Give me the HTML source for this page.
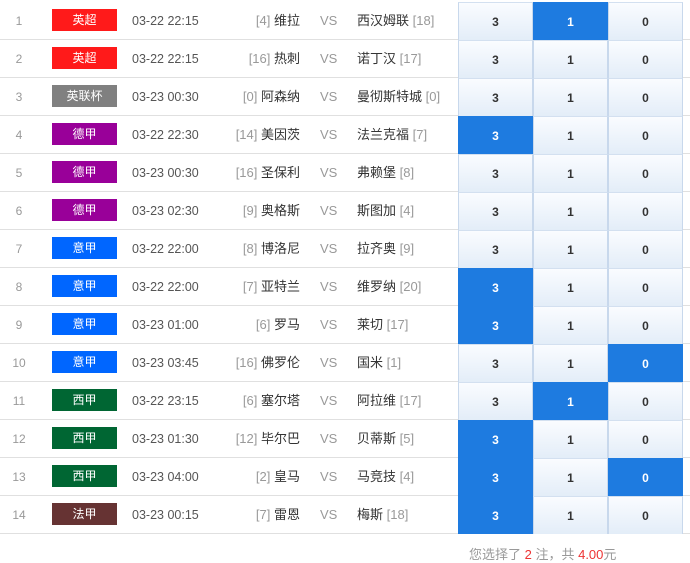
<!DOCTYPE html>
<html><head><meta charset="utf-8"><style>
body{margin:0;width:690px;height:562px;background:#fff;font-family:"Liberation Sans","Noto Sans CJK SC",sans-serif;position:relative;overflow:hidden}
.r{position:absolute;left:0;width:690px;height:38px;border-bottom:1px solid #e0e0e0;box-sizing:border-box;font-size:13px;color:#333}
.r>span{position:absolute;top:0;line-height:38px}
.n{left:0;width:38px;text-align:center;color:#999;font-size:12px}
.b{left:52px;width:65px;height:22px;top:7px!important;line-height:22px!important;color:#fff;text-align:center;font-size:12px}
.t{left:132px;color:#555;font-size:12.5px}
.h{right:390px;text-align:right;white-space:nowrap}
.v{left:320px;color:#999}
.a{left:357px;white-space:nowrap}
.g{color:#999}
.o{width:75px;height:38px;box-sizing:border-box;border-left:1px solid #c8d8ec;border-right:1px solid #c8d8ec;border-top:1px solid #d3e0f0;text-align:center;font-weight:bold;font-size:12px;background:linear-gradient(#fafcff,#e3edf8)}
.o.s{background:#1e7be0;color:#fff;border-color:#1e7be0}
.c1{left:458px}.c2{left:533px}.c3{left:608px}
.ft{position:absolute;top:544px;left:469px;font-size:13px;color:#999}
.red{color:#e33}
</style></head><body>
<div class="r" style="top:2px"><span class="n">1</span><span class="b" style="background:#ff1a1a">英超</span><span class="t">03-22 22:15</span><span class="h"><span class="g">[4]</span> 维拉</span><span class="v">VS</span><span class="a">西汉姆联 <span class="g">[18]</span></span><span class="o c1">3</span><span class="o c2 s">1</span><span class="o c3">0</span></div>
<div class="r" style="top:40px"><span class="n">2</span><span class="b" style="background:#ff1a1a">英超</span><span class="t">03-22 22:15</span><span class="h"><span class="g">[16]</span> 热刺</span><span class="v">VS</span><span class="a">诺丁汉 <span class="g">[17]</span></span><span class="o c1">3</span><span class="o c2">1</span><span class="o c3">0</span></div>
<div class="r" style="top:78px"><span class="n">3</span><span class="b" style="background:#808080">英联杯</span><span class="t">03-23 00:30</span><span class="h"><span class="g">[0]</span> 阿森纳</span><span class="v">VS</span><span class="a">曼彻斯特城 <span class="g">[0]</span></span><span class="o c1">3</span><span class="o c2">1</span><span class="o c3">0</span></div>
<div class="r" style="top:116px"><span class="n">4</span><span class="b" style="background:#990099">德甲</span><span class="t">03-22 22:30</span><span class="h"><span class="g">[14]</span> 美因茨</span><span class="v">VS</span><span class="a">法兰克福 <span class="g">[7]</span></span><span class="o c1 s">3</span><span class="o c2">1</span><span class="o c3">0</span></div>
<div class="r" style="top:154px"><span class="n">5</span><span class="b" style="background:#990099">德甲</span><span class="t">03-23 00:30</span><span class="h"><span class="g">[16]</span> 圣保利</span><span class="v">VS</span><span class="a">弗赖堡 <span class="g">[8]</span></span><span class="o c1">3</span><span class="o c2">1</span><span class="o c3">0</span></div>
<div class="r" style="top:192px"><span class="n">6</span><span class="b" style="background:#990099">德甲</span><span class="t">03-23 02:30</span><span class="h"><span class="g">[9]</span> 奥格斯</span><span class="v">VS</span><span class="a">斯图加 <span class="g">[4]</span></span><span class="o c1">3</span><span class="o c2">1</span><span class="o c3">0</span></div>
<div class="r" style="top:230px"><span class="n">7</span><span class="b" style="background:#0066ff">意甲</span><span class="t">03-22 22:00</span><span class="h"><span class="g">[8]</span> 博洛尼</span><span class="v">VS</span><span class="a">拉齐奥 <span class="g">[9]</span></span><span class="o c1">3</span><span class="o c2">1</span><span class="o c3">0</span></div>
<div class="r" style="top:268px"><span class="n">8</span><span class="b" style="background:#0066ff">意甲</span><span class="t">03-22 22:00</span><span class="h"><span class="g">[7]</span> 亚特兰</span><span class="v">VS</span><span class="a">维罗纳 <span class="g">[20]</span></span><span class="o c1 s">3</span><span class="o c2">1</span><span class="o c3">0</span></div>
<div class="r" style="top:306px"><span class="n">9</span><span class="b" style="background:#0066ff">意甲</span><span class="t">03-23 01:00</span><span class="h"><span class="g">[6]</span> 罗马</span><span class="v">VS</span><span class="a">莱切 <span class="g">[17]</span></span><span class="o c1 s">3</span><span class="o c2">1</span><span class="o c3">0</span></div>
<div class="r" style="top:344px"><span class="n">10</span><span class="b" style="background:#0066ff">意甲</span><span class="t">03-23 03:45</span><span class="h"><span class="g">[16]</span> 佛罗伦</span><span class="v">VS</span><span class="a">国米 <span class="g">[1]</span></span><span class="o c1">3</span><span class="o c2">1</span><span class="o c3 s">0</span></div>
<div class="r" style="top:382px"><span class="n">11</span><span class="b" style="background:#006633">西甲</span><span class="t">03-22 23:15</span><span class="h"><span class="g">[6]</span> 塞尔塔</span><span class="v">VS</span><span class="a">阿拉维 <span class="g">[17]</span></span><span class="o c1">3</span><span class="o c2 s">1</span><span class="o c3">0</span></div>
<div class="r" style="top:420px"><span class="n">12</span><span class="b" style="background:#006633">西甲</span><span class="t">03-23 01:30</span><span class="h"><span class="g">[12]</span> 毕尔巴</span><span class="v">VS</span><span class="a">贝蒂斯 <span class="g">[5]</span></span><span class="o c1 s">3</span><span class="o c2">1</span><span class="o c3">0</span></div>
<div class="r" style="top:458px"><span class="n">13</span><span class="b" style="background:#006633">西甲</span><span class="t">03-23 04:00</span><span class="h"><span class="g">[2]</span> 皇马</span><span class="v">VS</span><span class="a">马竞技 <span class="g">[4]</span></span><span class="o c1 s">3</span><span class="o c2">1</span><span class="o c3 s">0</span></div>
<div class="r" style="top:496px"><span class="n">14</span><span class="b" style="background:#663333">法甲</span><span class="t">03-23 00:15</span><span class="h"><span class="g">[7]</span> 雷恩</span><span class="v">VS</span><span class="a">梅斯 <span class="g">[18]</span></span><span class="o c1 s">3</span><span class="o c2">1</span><span class="o c3">0</span></div>
<div class="ft">您选择了 <span class="red">2</span> 注，共 <span class="red">4.00</span>元</div>
</body></html>
